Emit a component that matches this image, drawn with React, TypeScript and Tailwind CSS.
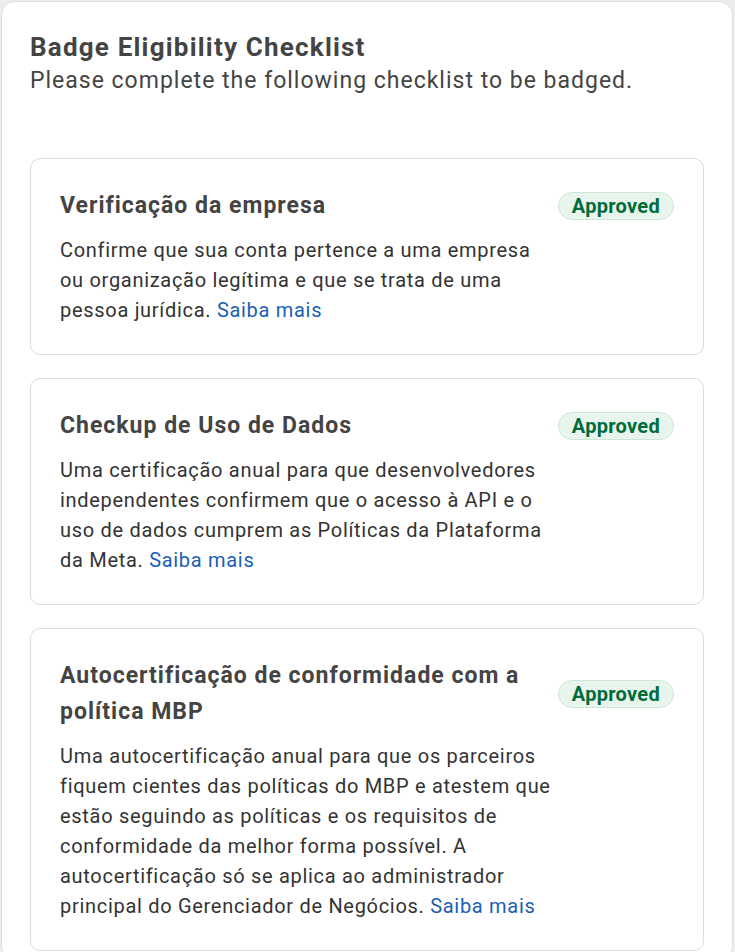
import React from "react";

type Item = { title: string; body: string };

const items: Item[] = [
  {
    title: "Verificação da empresa",
    body: "Confirme que sua conta pertence a uma empresa ou organização legítima e que se trata de uma pessoa jurídica.",
  },
  {
    title: "Checkup de Uso de Dados",
    body: "Uma certificação anual para que desenvolvedores independentes confirmem que o acesso à API e o uso de dados cumprem as Políticas da Plataforma da Meta.",
  },
  {
    title: "Autocertificação de conformidade com a política MBP",
    body: "Uma autocertificação anual para que os parceiros fiquem cientes das políticas do MBP e atestem que estão seguindo as políticas e os requisitos de conformidade da melhor forma possível. A autocertificação só se aplica ao administrador principal do Gerenciador de Negócios.",
  },
];

export default function App() {
  return (
    <div
      className="min-h-[952px] bg-[#ececec] pt-px pl-px pr-[2px]"
      style={{ fontFamily: "Roboto, 'Liberation Sans', sans-serif" }}
    >
      <div className="min-h-[960px] rounded-[14px] border border-[#e0e0e0] bg-white px-[28px] pt-[28px] pb-[5px]">
        <h1 className="text-[26px] leading-[34px] font-bold tracking-[1.2px] text-[#444]">
          Badge Eligibility Checklist
        </h1>
        <p className="text-[23px] leading-[34px] tracking-[1px] text-[#444]">
          Please complete the following checklist to be badged.
        </p>
        <div className="mt-[60px] flex flex-col gap-[23px]">
          {items.map((it) => (
            <div
              key={it.title}
              className="rounded-[10px] border border-[#dcdcdc] bg-white px-[29px] pt-[29px] pb-[29px]"
            >
              <div className="flex items-center justify-between gap-[20px]">
                <h2 className="flex-1 text-[23px] leading-[36px] font-bold tracking-[1px] text-[#444]">
                  {it.title}
                </h2>
                <span className="rounded-full border border-[#cce6d3] bg-[#e8f5ec] px-[13px] text-[20px] leading-[26px] font-bold tracking-[0.3px] text-[#006b3b]">
                  Approved
                </span>
              </div>
              <p className="mt-[11px] w-[495px] text-[20px] leading-[30px] tracking-[0.7px] text-[#333]">
                {it.body} <a className="text-[#1a5fb4]">Saiba mais</a>
              </p>
            </div>
          ))}
        </div>
      </div>
    </div>
  );
}
